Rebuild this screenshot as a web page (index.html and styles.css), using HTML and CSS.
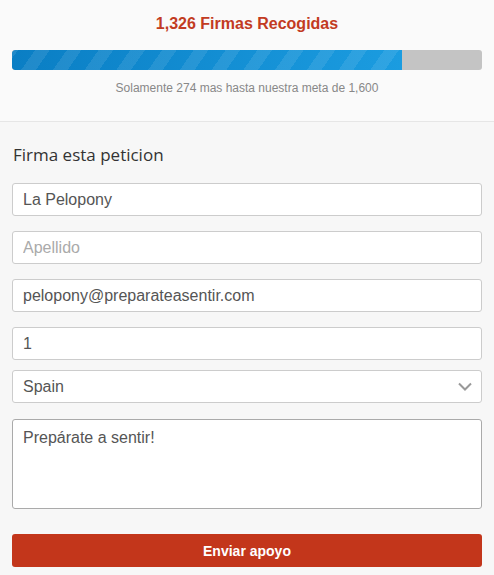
FILE: index.html
```html
<!DOCTYPE html>
<html lang="es">
<head>
<meta charset="utf-8">
<title>Firma esta peticion</title>
<link rel="stylesheet" href="styles.css">
</head>
<body>
<section class="progress-section">
  <h2 class="count">1,326 Firmas Recogidas</h2>
  <div class="bar"><div class="bar-fill" style="width: 82.9%"></div></div>
  <p class="remaining">Solamente 274 mas hasta nuestra meta de 1,600</p>
</section>
<section class="form-section">
  <h3 class="form-title">Firma esta peticion</h3>
  <form class="form">
    <input class="field" type="text" value="La Pelopony">
    <input class="field" type="text" placeholder="Apellido">
    <input class="field" type="email" value="pelopony@preparateasentir.com">
    <input class="field" type="text" value="1">
    <div class="select-wrap">
      <select class="field select"><option>Spain</option></select>
      <svg class="chev" width="14" height="9" viewBox="0 0 14 9"><path d="M1 1.5 L7 7.5 L13 1.5" fill="none" stroke="#999" stroke-width="2"/></svg>
    </div>
    <textarea class="field area">Prepárate a sentir!</textarea>
    <button class="submit" type="button">Enviar apoyo</button>
  </form>
</section>
</body>
</html>
```
FILE: styles.css
```css
* { box-sizing: border-box; }
html, body { margin: 0; padding: 0; }
body {
  width: 494px;
  height: 575px;
  background: #f7f7f7;
  font-family: "Liberation Sans", Arial, sans-serif;
  overflow: hidden;
}
.progress-section {
  background: #fafafa;
  border-bottom: 1px solid #e6e6e6;
  padding: 14px 12px 0;
  height: 122px;
}
.count {
  margin: 0;
  text-align: center;
  font-size: 16px;
  line-height: 20px;
  font-weight: bold;
  color: #c23b22;
}
.bar {
  margin-top: 16px;
  height: 20px;
  background: #c4c4c4;
  border-radius: 3px;
  overflow: hidden;
}
.bar-fill {
  height: 100%;
  background:
    repeating-linear-gradient(-55deg, rgba(255,255,255,0) 0 14px, rgba(255,255,255,0.09) 14px 26px),
    linear-gradient(to right, #0a7ec4, #1b9ce0);
  border-radius: 3px 0 0 3px;
}
.remaining {
  margin: 11px 0 0;
  text-align: center;
  font-size: 12px;
  line-height: 14px;
  color: #888;
}
.form-section {
  padding: 22px 12px 0;
}
.form-title {
  margin: 0;
  font-family: "Open Sans", Lato, sans-serif;
  font-weight: 400;
  font-size: 17px;
  line-height: 22px;
  color: #333;
  padding-left: 1px;
}
.form {
  display: flex;
  flex-direction: column;
  margin-top: 17px;
}
.field {
  display: block;
  width: 100%;
  height: 33px;
  margin: 0 0 15px;
  padding: 0 10px;
  border: 1px solid #ccc;
  border-radius: 3px;
  background: #fff;
  font-family: "Liberation Sans", Arial, sans-serif;
  font-size: 16px;
  color: #555;
  outline: none;
}
.field::placeholder { color: #aaa; }
.select-wrap {
  position: relative;
  margin-top: -5px;
}
.select {
  appearance: none;
  -webkit-appearance: none;
  height: 33px;
  margin-bottom: 16px;
}
.chev {
  position: absolute;
  right: 10px;
  top: 12px;
}
.area {
  height: 90px;
  padding: 8px 10px;
  resize: none;
  border-color: #aaa;
  line-height: 20px;
  margin-bottom: 25px;
}
.submit {
  height: 33px;
  width: 100%;
  border: none;
  border-radius: 3px;
  background: #c3361b;
  color: #fff;
  font-family: "Liberation Sans", Arial, sans-serif;
  font-weight: bold;
  font-size: 14px;
}
```
